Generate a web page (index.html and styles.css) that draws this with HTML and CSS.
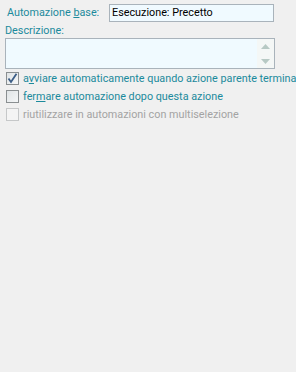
FILE: index.html
```html
<!DOCTYPE html>
<html>
<head>
<meta charset="utf-8">
<link rel="stylesheet" href="styles.css">
</head>
<body>
<div class="panel">
  <div class="row-base">
    <label class="lbl lbl-base">Automazione <u>b</u>ase:</label>
    <div class="textbox">Esecuzione: Precetto</div>
  </div>
  <div class="lbl lbl-desc">Descrizione:</div>
  <div class="textarea">
    <div class="scroll">
      <svg class="arr" width="9" height="5" viewBox="0 0 9 5"><path d="M0 5 L4.5 0 L9 5 Z" fill="#b7c9c4"/></svg>
      <svg class="arr" width="9" height="5" viewBox="0 0 9 5"><path d="M0 0 L4.5 5 L9 0 Z" fill="#b7c9c4"/></svg>
    </div>
  </div>
  <div class="checks">
    <div class="chk">
      <span class="box checked">
        <svg width="11" height="11" viewBox="0 0 11 11"><path d="M1.5 5.5 L4 9 L9.5 0.8" fill="none" stroke="#3c5d86" stroke-width="1.8"/></svg>
      </span>
      <span class="ctext">a<u>v</u>viare automaticamente quando azione parente termina</span>
    </div>
    <div class="chk">
      <span class="box"></span>
      <span class="ctext">fer<u>m</u>are automazione dopo questa azione</span>
    </div>
    <div class="chk disabled">
      <span class="box"></span>
      <span class="ctext">riutilizzare in automazioni con multiselezione</span>
    </div>
  </div>
</div>
</body>
</html>
```

FILE: styles.css
```css
html, body {
  margin: 0;
  padding: 0;
  background: #f0f0f0;
  width: 296px;
  height: 372px;
  overflow: hidden;
}
.panel {
  font-family: "Roboto", "Open Sans", sans-serif;
  font-size: 10.8px;
  color: #1b8a9c;
  padding: 3px 0 0 5px;
  white-space: nowrap;
  overflow: hidden;
}
.row-base {
  display: flex;
  align-items: center;
  height: 19px;
}
.lbl-base {
  width: 104px;
  padding-left: 2px;
  box-sizing: border-box;
}
.textbox {
  width: 165px;
  height: 18px;
  box-sizing: border-box;
  border: 1px solid #a9b3bb;
  background: #f0faff;
  color: #000;
  padding: 0 2px;
  line-height: 16px;
}
.lbl-desc {
  margin-top: 2px;
  height: 14px;
  line-height: 14px;
}
.textarea {
  width: 270px;
  height: 31px;
  box-sizing: border-box;
  border: 1px solid #a9b3bb;
  background: #f0faff;
  display: flex;
  justify-content: flex-end;
}
.scroll {
  width: 17px;
  background: #f4f7f6;
  display: flex;
  flex-direction: column;
  justify-content: space-between;
  align-items: center;
  padding: 5px 0 4px;
  box-sizing: border-box;
}
.arr { display: block; }
.checks {
  padding-top: 0;
  display: flex;
  flex-direction: column;
}
.chk {
  display: flex;
  align-items: center;
  height: 18px;
}
.box {
  width: 13px;
  height: 13px;
  box-sizing: border-box;
  border: 1px solid #8a8f91;
  background: linear-gradient(135deg, #e0e4e6, #f4f6f7);
  margin-left: 1px;
  margin-right: 4px;
  display: flex;
  align-items: center;
  justify-content: center;
  flex: none;
}
.disabled { color: #a3a3a3; }
.disabled .box {
  border-color: #c6c8c9;
  background: #f4f4f4;
}
```
